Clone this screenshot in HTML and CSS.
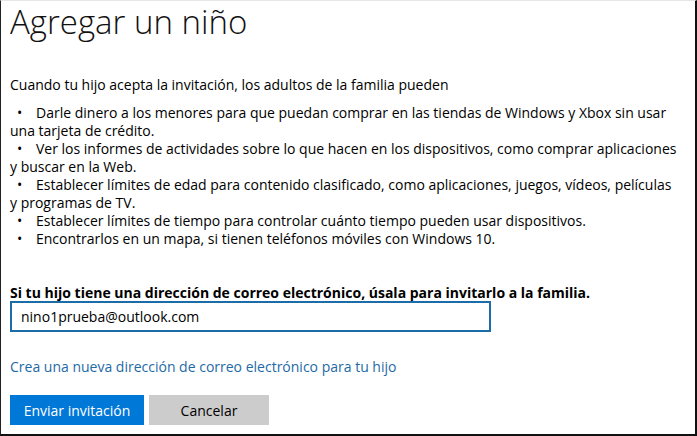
FILE: index.html
```html
<!DOCTYPE html>
<html lang="es">
<head>
    <meta charset="UTF-8">
    <title>Agregar un niño</title>
    <link rel="stylesheet" href="styles.css">
</head>
<body>
    <div class="dialog">
        <h1 class="title">Agregar un niño</h1>
        <p class="intro">Cuando tu hijo acepta la invitación, los adultos de la familia pueden</p>
        <div class="perks">
            <p>Darle dinero a los menores para que puedan comprar en las tiendas de Windows y Xbox sin usar una tarjeta de crédito.</p>
            <p>Ver los informes de actividades sobre lo que hacen en los dispositivos, como comprar aplicaciones y buscar en la Web.</p>
            <p>Establecer límites de edad para contenido clasificado, como aplicaciones, juegos, vídeos, películas y programas de TV.</p>
            <p>Establecer límites de tiempo para controlar cuánto tiempo pueden usar dispositivos.</p>
            <p>Encontrarlos en un mapa, si tienen teléfonos móviles con Windows 10.</p>
        </div>
        <label class="email-label" for="email">Si tu hijo tiene una dirección de correo electrónico, úsala para invitarlo a la familia.</label>
        <input class="email" id="email" type="text" value="nino1prueba@outlook.com">
        <a class="new-email" href="#">Crea una nueva dirección de correo electrónico para tu hijo</a>
        <div class="actions">
            <button class="btn btn-primary">Enviar invitación</button>
            <button class="btn btn-secondary">Cancelar</button>
        </div>
    </div>
</body>
</html>
```

FILE: styles.css
```css
* {
    margin: 0;
    padding: 0;
    box-sizing: border-box;
}

body {
    font-family: 'Open Sans', 'Noto Sans', sans-serif;
    font-size: 14px;
    color: #000;
    background-color: #fff;
}

.dialog {
    width: 697px;
    height: 436px;
    border-top: 1px solid #e6e6e6;
    border-left: 1px solid #222;
    border-right: 2px solid #111;
    border-bottom: 2px solid #111;
    padding: 0 9px;
    display: flex;
    flex-direction: column;
    align-items: flex-start;
}

.title {
    font-weight: 300;
    font-size: 33px;
    line-height: 42px;
    color: #111;
}

.intro {
    margin-top: 33px;
    line-height: 18px;
}

.perks {
    margin-top: 10px;
    line-height: 18px;
    width: 672px;
}

    .perks p::before {
        content: "•";
        display: inline-block;
        box-sizing: border-box;
        width: 26px;
        padding-left: 7px;
    }

.email-label {
    margin-top: 37px;
    font-weight: 700;
    line-height: 16px;
}

.email {
    width: 481px;
    height: 31px;
    border: 2px solid #1c6ca8;
    padding: 0 9px;
    font-family: inherit;
    font-size: 14px;
    color: #000;
    outline: none;
}

.new-email {
    margin-top: 26px;
    color: #1e6aa5;
    text-decoration: none;
    line-height: 18px;
}

.actions {
    margin-top: 19px;
    display: flex;
    gap: 5px;
}

.btn {
    height: 30px;
    border: none;
    font-family: inherit;
    font-size: 14px;
    cursor: pointer;
}

.btn-primary {
    width: 134px;
    background-color: #0078d7;
    color: #fff;
}

.btn-secondary {
    width: 120px;
    background-color: #cccccc;
    color: #000;
}
```
